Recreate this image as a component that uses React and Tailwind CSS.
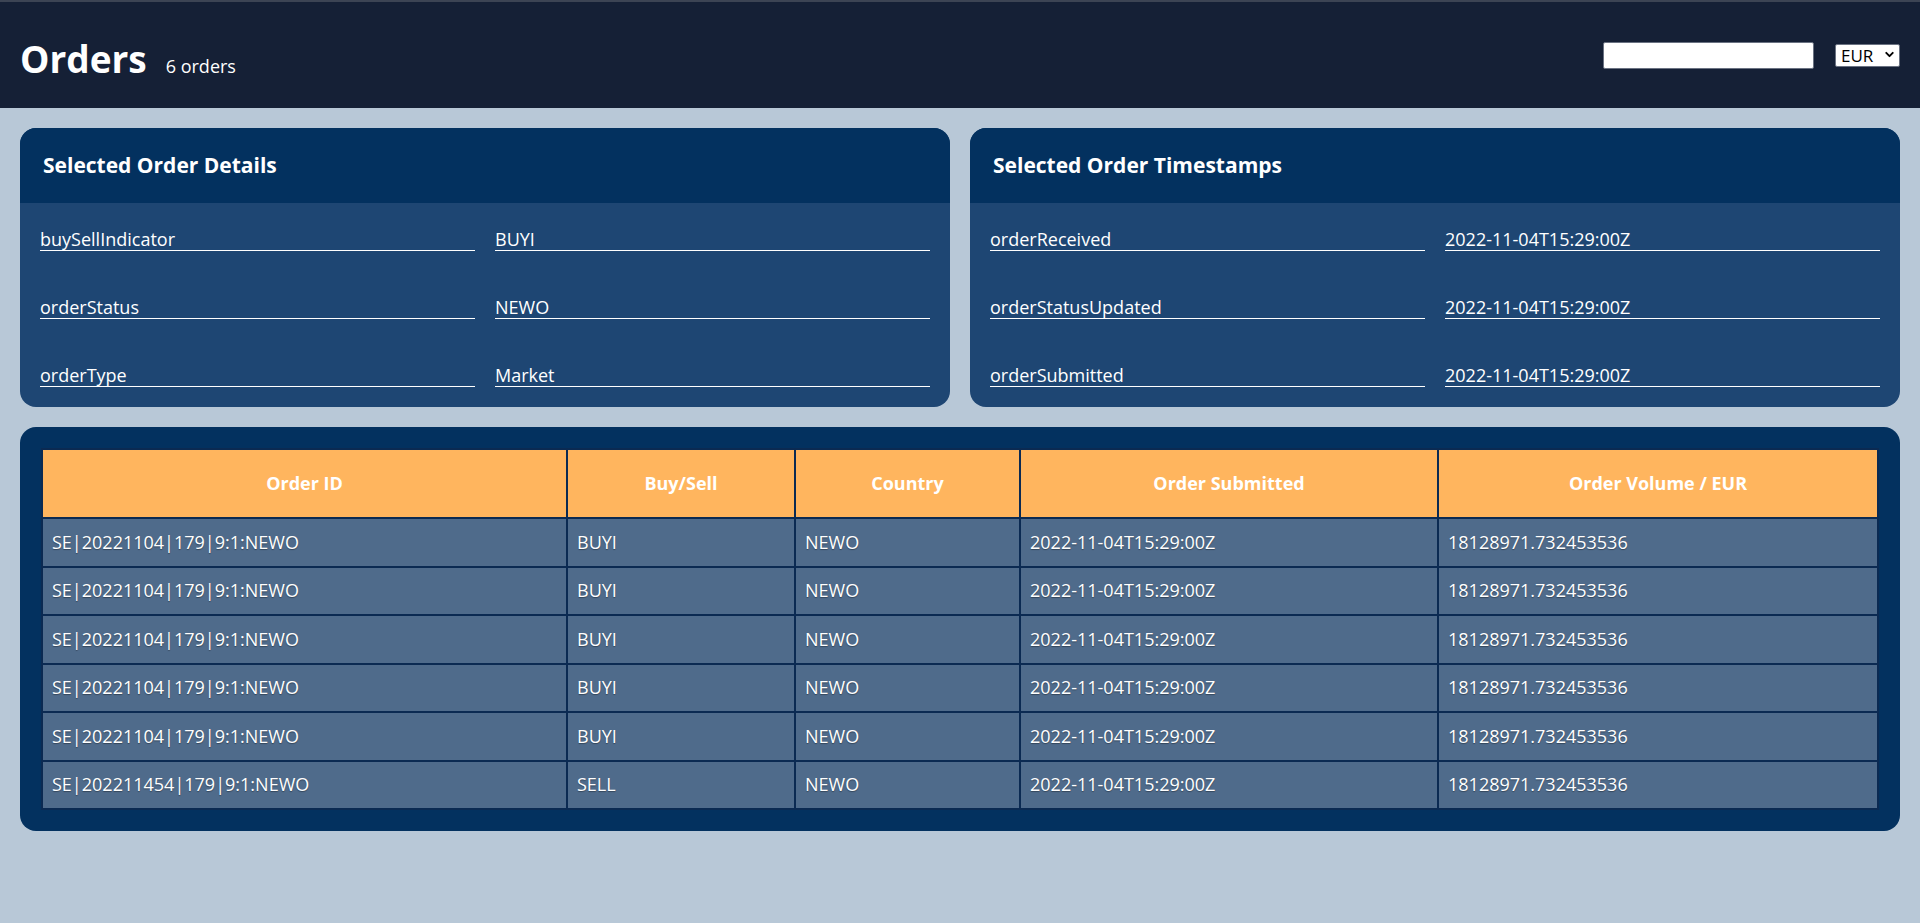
import { ChevronDown } from 'lucide-react';

const details = [
  ['buySellIndicator', 'BUYI'],
  ['orderStatus', 'NEWO'],
  ['orderType', 'Market'],
];

const timestamps = [
  ['orderReceived', '2022-11-04T15:29:00Z'],
  ['orderStatusUpdated', '2022-11-04T15:29:00Z'],
  ['orderSubmitted', '2022-11-04T15:29:00Z'],
];

const columns = [
  { label: 'Order ID', width: 'w-[525px]' },
  { label: 'Buy/Sell', width: 'w-[228px]' },
  { label: 'Country', width: 'w-[225px]' },
  { label: 'Order Submitted', width: 'w-[418px]' },
  { label: 'Order Volume / EUR', width: 'w-[440px]' },
];

const orders = [
  ['SE|20221104|179|9:1:NEWO', 'BUYI', 'NEWO', '2022-11-04T15:29:00Z', '18128971.732453536'],
  ['SE|20221104|179|9:1:NEWO', 'BUYI', 'NEWO', '2022-11-04T15:29:00Z', '18128971.732453536'],
  ['SE|20221104|179|9:1:NEWO', 'BUYI', 'NEWO', '2022-11-04T15:29:00Z', '18128971.732453536'],
  ['SE|20221104|179|9:1:NEWO', 'BUYI', 'NEWO', '2022-11-04T15:29:00Z', '18128971.732453536'],
  ['SE|20221104|179|9:1:NEWO', 'BUYI', 'NEWO', '2022-11-04T15:29:00Z', '18128971.732453536'],
  ['SE|202211454|179|9:1:NEWO', 'SELL', 'NEWO', '2022-11-04T15:29:00Z', '18128971.732453536'],
];

// card with a dark title bar and a two-column list of underlined fields
const InfoCard = ({ title, rows }) => (
  <section className="rounded-2xl overflow-hidden bg-[#1e4673]">
    <div className="h-[75px] bg-[#03315f] px-[23px] flex items-center">
      <h3 className="text-[21px] font-bold text-white">{title}</h3>
    </div>
    <div className="grid grid-cols-2 gap-x-5 gap-y-10 p-5">
      {rows.map(([label, value]) => (
        <div key={label} className="contents">
          <div className="border-b border-white leading-[22px] pt-[5px] text-white">{label}</div>
          <div className="border-b border-white leading-[22px] pt-[5px] text-white">{value}</div>
        </div>
      ))}
    </div>
  </section>
);

export default function App() {
  return (
    <div className="min-h-screen bg-[#b8c8d7] text-[18px] font-['Open_Sans',sans-serif]">
      <header className="h-[108px] bg-[#152036] border-t-2 border-[#3c4454] flex items-center justify-between px-5">
        <div className="flex items-baseline gap-[19px] pt-2">
          <h1 className="text-[37px] font-bold text-white">Orders</h1>
          <span className="text-white">6 orders</span>
        </div>
        <div className="flex items-center gap-[21px]">
          <input className="w-[211px] h-[27px] bg-white border border-gray-500 rounded-[2px]" />
          <div className="relative">
            <select className="appearance-none w-[65px] h-[23px] bg-white text-black text-[17px] leading-[21px] pl-[5px] border border-gray-500 rounded-[2px]">
              <option>EUR</option>
              <option>USD</option>
              <option>SEK</option>
            </select>
            <ChevronDown className="absolute right-[4px] top-[6px] w-[13px] h-[13px] text-black pointer-events-none" strokeWidth={3.5} />
          </div>
        </div>
      </header>

      <main className="p-5">
        <div className="grid grid-cols-2 gap-5">
          <InfoCard title="Selected Order Details" rows={details} />
          <InfoCard title="Selected Order Timestamps" rows={timestamps} />
        </div>

        <section className="mt-5 rounded-2xl bg-[#03315f] p-[21px]">
          <table className="w-full table-fixed border-collapse text-white">
            <thead>
              <tr className="h-[69px] bg-[#ffb55e]">
                {columns.map((col) => (
                  <th key={col.label} className={`${col.width} border-2 border-[#0b2a52] font-bold text-center`}>
                    {col.label}
                  </th>
                ))}
              </tr>
            </thead>
            <tbody>
              {orders.map((row, i) => (
                <tr key={i} className="h-[48.5px] bg-[#4f6b8b]">
                  {row.map((cell, j) => (
                    <td key={j} className="border-2 border-[#0b2a52] pl-[9px] [text-shadow:0_1px_1px_rgba(0,0,0,0.35)]">
                      {cell}
                    </td>
                  ))}
                </tr>
              ))}
            </tbody>
          </table>
        </section>
      </main>
    </div>
  );
}
